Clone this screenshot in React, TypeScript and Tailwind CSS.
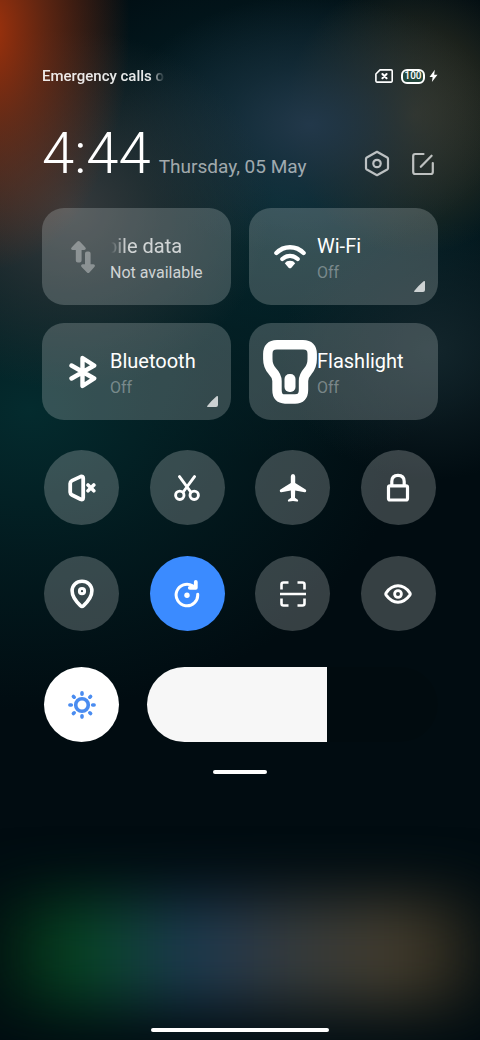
import { useState } from "react";
import type { ReactNode } from "react";
import { clsx } from "clsx";

interface TileProps {
  title: string;
  status: string;
  icon: ReactNode;
  expandable?: boolean;
  unavailable?: boolean;
}

interface Toggle {
  label: string;
  icon: ReactNode;
  active?: boolean;
}

const stroke = {
  fill: "none",
  stroke: "currentColor",
  strokeLinecap: "round",
  strokeLinejoin: "round",
} as const;

const toggles: Toggle[] = [
  { label: "Mute", icon: <MuteIcon /> },
  { label: "Screenshot", icon: <ScissorsIcon /> },
  { label: "Airplane mode", icon: <PlaneIcon /> },
  { label: "Lock screen", icon: <LockIcon /> },
  { label: "Location", icon: <PinIcon /> },
  { label: "Auto-rotate", icon: <RotateIcon />, active: true },
  { label: "Scanner", icon: <ScanIcon /> },
  { label: "Reading mode", icon: <EyeIcon /> },
];

export default function App() {
  return (
    <div className="relative isolate flex min-h-screen flex-col overflow-hidden bg-[#010c11] px-[42px] pt-[66px] pb-2 font-[Roboto,sans-serif] text-white">
      <Wallpaper />
      <StatusBar />
      <Header />

      <main>
        <div className="mt-[25px] grid grid-cols-2 gap-[18px]">
          <Tile title="bile data" status="Not available" icon={<DataIcon />} unavailable />
          <Tile title="Wi-Fi" status="Off" icon={<WifiIcon />} expandable />
          <Tile title="Bluetooth" status="Off" icon={<BluetoothIcon />} expandable />
          <Tile title="Flashlight" status="Off" icon={<FlashlightIcon />} />
        </div>

        <div className="mt-[30px] grid grid-cols-[repeat(4,75px)] justify-between gap-y-[31px] px-[2px]">
          {toggles.map((toggle) => (
            <RoundToggle key={toggle.label} {...toggle} />
          ))}
        </div>

        <Brightness />
      </main>

      <div className="mx-auto mt-7 h-1 w-[54px] rounded-full bg-white" />
      <div className="mx-auto mt-auto h-1 w-[178px] rounded-full bg-white" />
    </div>
  );
}

function Wallpaper() {
  return (
    <div aria-hidden="true" className="absolute inset-0 -z-10">
      <div className="absolute inset-0 bg-[radial-gradient(ellipse_140px_240px_at_-10px_30px,#a0320c_0%,#863012b0_40%,#50281800_100%),radial-gradient(ellipse_200px_180px_at_70px_210px,#363a3c_0%,#2e3538a0_45%,#20303000_100%),radial-gradient(ellipse_190px_130px_at_310px_125px,#22384a_0%,#1e344490_45%,#10202c00_100%),radial-gradient(ellipse_130px_140px_at_415px_115px,#403822_0%,#363120a0_50%,#18201c00_100%),radial-gradient(ellipse_150px_130px_at_430px_350px,#13252b_0%,#0a1a2000_100%),radial-gradient(ellipse_380px_300px_at_30px_410px,#042b2e_0%,#032226a0_50%,#010c1100_100%),radial-gradient(ellipse_330px_260px_at_280px_200px,#052c33_0%,#02151a00_100%)]" />
      <div className="absolute -inset-x-2 bottom-8 h-[110px] bg-[linear-gradient(90deg,#02150f_0%,#064824_18%,#1c3852_40%,#363c3e_60%,#443c2b_84%,#101512_100%)] blur-[30px]" />
    </div>
  );
}

function StatusBar() {
  return (
    <div className="flex h-5 items-center justify-between">
      <span className="w-[123px] text-[15px] leading-5 font-medium whitespace-nowrap text-white/90 [mask-image:linear-gradient(90deg,#000_88%,transparent)]">
        Emergency calls o
      </span>
      <div className="flex items-center gap-2">
        <svg width="18" height="14" viewBox="0 0 18 14" {...stroke} strokeWidth="1.600" aria-hidden="true">
          <path d="M5 .9h11.200q1 0 1 1v10.200q0 1-1 1H1.900q-1 0-1-1V5z" />
          <path d="m7.400 5 4.200 4.200M11.600 5 7.400 9.200" strokeWidth="2" />
        </svg>
        <span className="flex items-center gap-1">
          <span className="flex h-[15px] w-6 items-center justify-center rounded-[6px] border-2 border-white bg-[#24483d] text-[10px] leading-none font-medium">
            100
          </span>
          <svg width="9" height="14" viewBox="0 0 9 14" fill="currentColor" aria-hidden="true">
            <path d="M5.800.8.5 7.900h3.100l-.7 5.200 5.600-7.400H5.200z" />
          </svg>
        </span>
      </div>
    </div>
  );
}

function Header() {
  return (
    <header className="mt-[37px] flex items-end justify-between">
      <div className="flex items-baseline gap-2">
        <time className="text-[58px] leading-[60px] font-light">4:44</time>
        <span className="text-[19px] leading-6 text-white/60">Thursday, 05 May</span>
      </div>
      <div className="flex items-center gap-[22px] pr-1 pb-1.5 text-white/70">
        <button type="button" aria-label="Settings">
          <svg width="26" height="27" viewBox="0 0 26 27" {...stroke} strokeWidth="2.200" className="block">
            <path d="M13 1.800 23.200 7.500q.8.500.8 1.300v9.400q0 .8-.8 1.300L13 25.200 2.800 19.500q-.8-.5-.8-1.300V8.800q0-.8.8-1.300z" />
            <circle cx="13" cy="13.500" r="3.700" />
          </svg>
        </button>
        <button type="button" aria-label="Edit">
          <svg width="22" height="24" viewBox="0 0 22 24" {...stroke} strokeWidth="2.200" className="block">
            <path d="M11.500 2H3.200q-2 0-2 2v16q0 2 2 2h15.600q2 0 2-2v-9" />
            <path d="M8.800 14.800 19.600 3.700" />
          </svg>
        </button>
      </div>
    </header>
  );
}

function Tile({ title, status, icon, expandable, unavailable }: TileProps) {
  return (
    <button
      type="button"
      disabled={unavailable}
      className="relative flex h-[97px] items-center rounded-[22px] bg-[#c8d0d0]/25 pl-[14px] text-left"
    >
      <span
        className={clsx(
          "flex w-[54px] shrink-0 items-center justify-center",
          unavailable && "text-white/35",
        )}
      >
        {icon}
      </span>
      <span className="flex flex-col gap-px pt-[3px]">
        <span
          className={clsx(
            "text-[20px] leading-7 whitespace-nowrap",
            unavailable &&
              "-ml-1 text-white/75 [mask-image:linear-gradient(90deg,transparent_5px,#000_20px)]",
          )}
        >
          {title}
        </span>
        <span
          className={clsx(
            "text-[16px] leading-6 whitespace-nowrap",
            unavailable ? "text-white/75" : "text-white/35",
          )}
        >
          {status}
        </span>
      </span>
      {expandable && (
        <svg
          width="11"
          height="11"
          viewBox="0 0 11 11"
          className="absolute right-[13px] bottom-[13px] text-white/75"
          fill="currentColor"
          aria-hidden="true"
        >
          <path d="M9.300.4Q11-.8 11 1.200V9q0 2-2 2H1.200Q-.6 11 .6 9.500 4.500 4.500 9.300.4z" />
        </svg>
      )}
    </button>
  );
}

function RoundToggle({ label, icon, active }: Toggle) {
  return (
    <button
      type="button"
      aria-label={label}
      aria-pressed={Boolean(active)}
      className={clsx(
        "flex size-[75px] items-center justify-center rounded-full",
        active ? "bg-[#3b8bff]" : "bg-[#d8dcdc]/25",
      )}
    >
      {icon}
    </button>
  );
}

function Brightness() {
  const [level, setLevel] = useState(62);

  return (
    <div className="mt-9 flex gap-7 pl-[2px]">
      <button
        type="button"
        aria-label="Auto brightness"
        className="flex size-[75px] shrink-0 items-center justify-center rounded-full bg-white text-[#4a8cf0]"
      >
        <SunIcon />
      </button>
      <input
        type="range"
        aria-label="Brightness"
        min={0}
        max={100}
        value={level}
        onChange={(e) => setLevel(Number(e.target.value))}
        className="h-[75px] min-w-0 flex-1 cursor-pointer appearance-none overflow-hidden rounded-full [&::-webkit-slider-thumb]:size-0 [&::-webkit-slider-thumb]:appearance-none"
        style={{
          background: `linear-gradient(90deg, #f7f7f7 ${level}%, #010b0f ${level}%)`,
        }}
      />
    </div>
  );
}

function DataIcon() {
  return (
    <svg width="24" height="32" viewBox="0 0 24 32" fill="currentColor" aria-hidden="true">
      <path d="M6.400.6q1.200-1 2.400 0l5.400 5.600q1.600 2.400-1 2.800h-2.600v10.600q0 2-2 2H6.800q-2 0-2-2V9H1.600Q-1 8.600.8 6.200z" />
      <path d="M16 31.400q1.200 1 2.400 0l5-5.400q1.400-2.400-1-2.800h-2.800V12.400q0-2-2-2h-1.600q-2 0-2 2v10.800h-2.400q-2.400.4-1 2.800z" />
    </svg>
  );
}

function WifiIcon() {
  return (
    <svg width="32" height="25" viewBox="0 0 32 25" {...stroke} aria-hidden="true">
      <path d="M2.400 9Q8 3.200 16 3.200T29.600 9" strokeWidth="4.400" />
      <path d="M8.300 15Q11.600 11.900 16 11.900t7.700 3.100" strokeWidth="4.200" />
      <path d="M16 16.800q3.600 0 5.200 2.400L17.400 23.800q-1.400 1-2.800 0L10.800 19.200Q12.400 16.800 16 16.800z" fill="currentColor" stroke="none" />
    </svg>
  );
}

function BluetoothIcon() {
  return (
    <svg width="28" height="34" viewBox="0 0 28 34" {...stroke} strokeWidth="4.400" aria-hidden="true">
      <path d="M2.500 10.500 25.200 23.500 13.500 31V3L25.200 10.500 2.500 23.500" />
    </svg>
  );
}

function FlashlightIcon() {
  return (
    <svg width="54" height="64" viewBox="0 0 54 64" aria-hidden="true">
      <path
        d="M14 4.800H40Q49.200 4.800 49.200 14V19Q49.200 26 45 31Q40.500 36 40.500 41V50Q40.500 59 32 59H22Q14 59 14 50V41Q14 36 9.200 31Q4.800 26 4.800 19V14Q4.800 4.800 14 4.800Z"
        fill="none"
        stroke="currentColor"
        strokeWidth="9.400"
      />
      <rect x="21.500" y="34" width="11" height="18" rx="5" fill="currentColor" />
    </svg>
  );
}

function MuteIcon() {
  return (
    <svg width="28" height="28" viewBox="0 0 28 28" {...stroke} strokeWidth="3.800" aria-hidden="true">
      <path d="M12.600 2.600 4 6.600Q2.200 7.600 2.200 9.400v8.800q0 1.800 1.800 2.800l8.600 4.200q2.600 1 2.600-1.600V4.200q0-2.400-2.600-1.600z" />
      <path d="m20 11 5.800 5.800M25.800 11 20 16.800" strokeWidth="3.600" />
    </svg>
  );
}

function ScissorsIcon() {
  return (
    <svg width="26" height="26" viewBox="0 0 26 26" {...stroke} strokeWidth="2.900" aria-hidden="true">
      <path d="M5.500 1.600 16.800 17M20.500 1.600 9.200 17" />
      <circle cx="5.800" cy="20.300" r="4.200" />
      <circle cx="20.200" cy="20.300" r="4.200" />
    </svg>
  );
}

function PlaneIcon() {
  return (
    <svg width="28" height="28" viewBox="0 0 28 28" fill="currentColor" aria-hidden="true">
      <path d="M14 0q2.200 0 2.200 2.600V9l10.400 6.400q.8.600.6 1.600-.2 1.400-1.600 1.200L16.200 16.600l-.2 7.200 2.800 2q.6.600.2 1.200-.4.800-1.200.6L14 27l-3.800.6q-.8.200-1.200-.6-.4-.6.200-1.200l2.800-2-.2-7.200-9.400 1.600q-1.400.2-1.600-1.200-.2-1 .6-1.600L11.800 9V2.600Q11.800 0 14 0z" />
    </svg>
  );
}

function LockIcon() {
  return (
    <svg width="24" height="30" viewBox="0 0 24 30" {...stroke} strokeWidth="3.200" aria-hidden="true">
      <rect x="2.500" y="12.800" width="19" height="14.200" rx="1.500" />
      <path d="M5.800 12V8.600Q5.800 2.400 12 2.400t6.200 6.200V12" />
    </svg>
  );
}

function PinIcon() {
  return (
    <svg width="24" height="30" viewBox="0 0 24 30" {...stroke} strokeWidth="3.600" aria-hidden="true">
      <path d="M12 2.200c5.600 0 9.900 4.200 9.900 9.600 0 5.400-3.600 10.400-8.300 14.800q-1.600 1.400-3.200 0C5.700 22.200 2.100 17.200 2.100 11.800c0-5.400 4.300-9.600 9.900-9.600z" />
      <circle cx="12" cy="12.200" r="2.600" strokeWidth="3" />
    </svg>
  );
}

function RotateIcon() {
  return (
    <svg width="26" height="28" viewBox="0 0 26 28" {...stroke} strokeWidth="3" aria-hidden="true">
      <path d="M18.600 5.800A10.800 10.800 0 1 0 23.700 14.200" />
      <path d="M21.800 2V7.800H15.800" strokeWidth="3.800" />
      <circle cx="13" cy="15.200" r="2.700" fill="currentColor" stroke="none" />
    </svg>
  );
}

function ScanIcon() {
  return (
    <svg width="26" height="26" viewBox="0 0 26 26" {...stroke} strokeLinecap="butt" strokeWidth="2.600" aria-hidden="true">
      <path d="M1.500 8.500V3.500q0-2 2-2h5M17.500 1.500h5q2 0 2 2v5M24.500 17.500v5q0 2-2 2h-5M8.500 24.500h-5q-2 0-2-2v-5M0 13h26" />
    </svg>
  );
}

function EyeIcon() {
  return (
    <svg width="28" height="20" viewBox="0 0 28 20" {...stroke} strokeWidth="3" aria-hidden="true">
      <path d="M2.200 8.800Q7.200 1.800 14 1.800T25.800 8.800q.8 1.200 0 2.400-5 7-11.800 7T2.200 11.200q-.8-1.200 0-2.400z" />
      <circle cx="14" cy="10" r="3.400" strokeWidth="2.800" />
    </svg>
  );
}

function SunIcon() {
  return (
    <svg width="28" height="28" viewBox="0 0 28 28" {...stroke} strokeWidth="3.600" aria-hidden="true">
      <circle cx="14" cy="14" r="6.300" />
      <path d="M14 1.900v1.400M14 24.700v1.400M1.900 14h1.400M24.700 14h1.400M5.400 5.400l.8.800M21.800 21.800l.8.800M5.400 22.600l.8-.8M21.800 6.200l.8-.8" />
    </svg>
  );
}
